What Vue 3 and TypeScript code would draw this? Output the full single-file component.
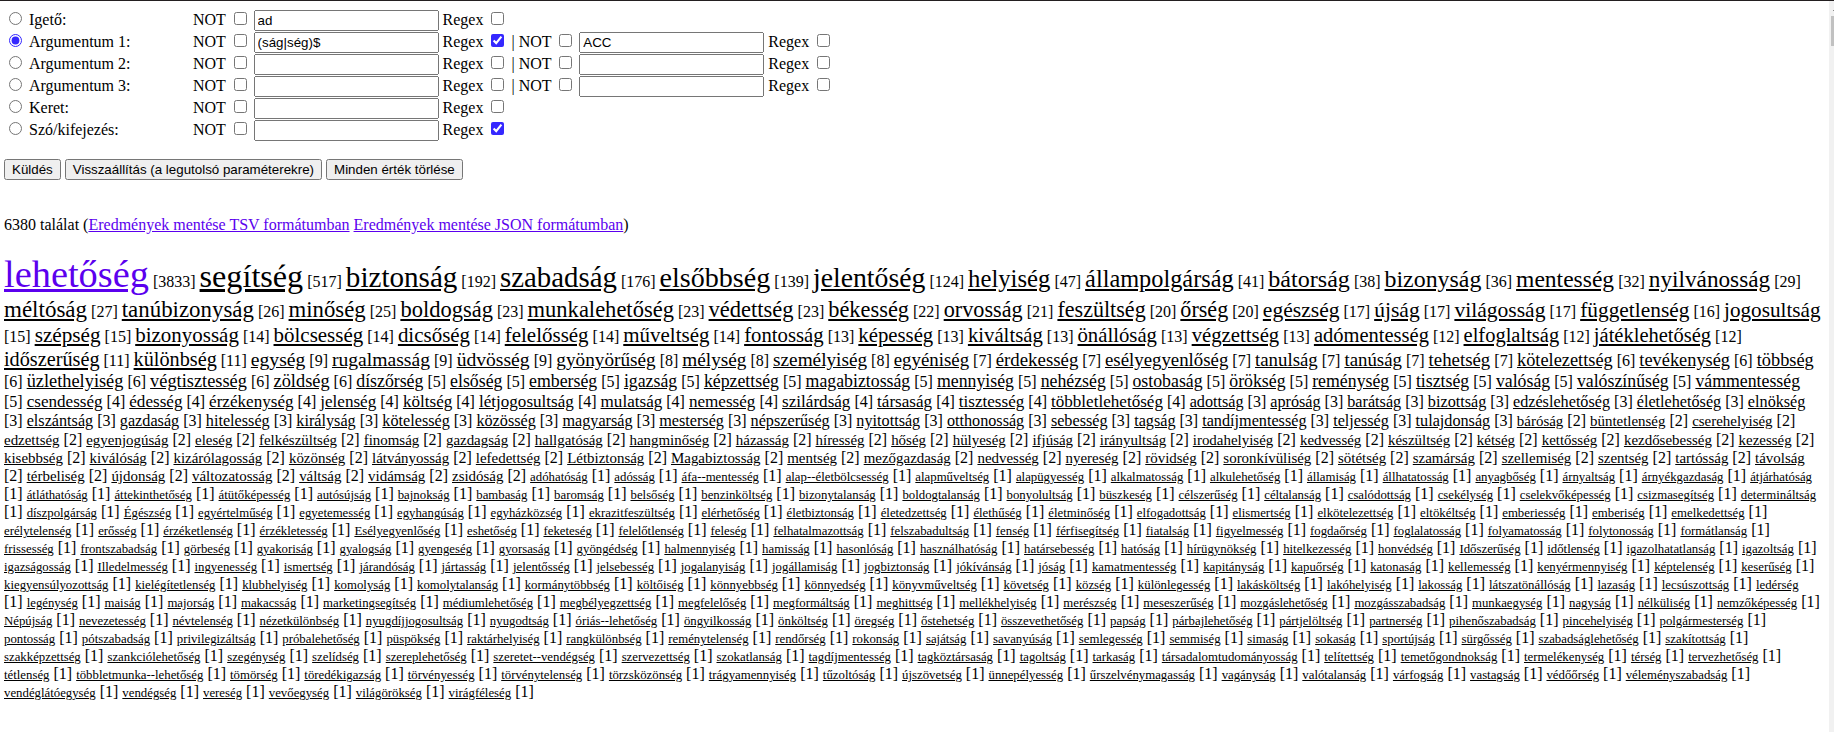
<script setup lang="ts">
import { reactive, ref } from 'vue'

interface Condition {
  not: boolean
  value: string
  regex: boolean
}

interface Field {
  id: string
  label: string
  conditions: Condition[]
}

const condition = (value = '', regex = false): Condition => ({ not: false, value, regex })

const initialFields = (): Field[] => [
  { id: 'verb', label: 'Igető:', conditions: [condition('ad')] },
  { id: 'arg1', label: 'Argumentum 1:', conditions: [condition('(ság|ség)$', true), condition('ACC')] },
  { id: 'arg2', label: 'Argumentum 2:', conditions: [condition(), condition()] },
  { id: 'arg3', label: 'Argumentum 3:', conditions: [condition(), condition()] },
  { id: 'frame', label: 'Keret:', conditions: [condition()] },
  { id: 'word', label: 'Szó/kifejezés:', conditions: [condition('', true)] },
]

const fields = reactive<Field[]>(initialFields())
const selected = ref('arg1')

function restore() {
  fields.splice(0, fields.length, ...initialFields())
  selected.value = 'arg1'
}

function clearAll() {
  for (const field of fields) {
    for (const c of field.conditions) Object.assign(c, condition())
  }
}

// Words grouped by the number of occurrences.
const groups: [number, string][] = [
  [3833, 'lehetőség'],
  [517, 'segítség'],
  [192, 'biztonság'],
  [176, 'szabadság'],
  [139, 'elsőbbség'],
  [124, 'jelentőség'],
  [47, 'helyiség'],
  [41, 'állampolgárság'],
  [38, 'bátorság'],
  [36, 'bizonyság'],
  [32, 'mentesség'],
  [29, 'nyilvánosság'],
  [27, 'méltóság'],
  [26, 'tanúbizonyság'],
  [25, 'minőség'],
  [23, 'boldogság munkalehetőség védettség'],
  [22, 'békesség'],
  [21, 'orvosság'],
  [20, 'feszültség őrség'],
  [17, 'egészség újság világosság'],
  [16, 'függetlenség'],
  [15, 'jogosultság szépség'],
  [14, 'bizonyosság bölcsesség dicsőség felelősség műveltség'],
  [13, 'fontosság képesség kiváltság önállóság végzettség'],
  [12, 'adómentesség elfoglaltság játéklehetőség'],
  [11, 'időszerűség különbség'],
  [9, 'egység rugalmasság üdvösség'],
  [8, 'gyönyörűség mélység személyiség'],
  [7, 'egyéniség érdekesség esélyegyenlőség tanulság tanúság tehetség'],
  [6, 'kötelezettség tevékenység többség üzlethelyiség végtisztesség zöldség'],
  [5, `díszőrség elsőség emberség igazság képzettség magabiztosság mennyiség nehézség ostobaság
    örökség reménység tisztség valóság valószínűség vámmentesség`],
  [4, `csendesség édesség érzékenység jelenség költség létjogosultság mulatság nemesség szilárdság
    társaság tisztesség többletlehetőség`],
  [3, `adottság apróság barátság bizottság edzéslehetőség életlehetőség elnökség elszántság gazdaság
    hitelesség királyság kötelesség közösség magyarság mesterség népszerűség nyitottság otthonosság
    sebesség tagság tandíjmentesség teljesség tulajdonság`],
  [2, `báróság büntetlenség cserehelyiség edzettség egyenjogúság eleség felkészültség finomság
    gazdagság hallgatóság hangminőség házasság híresség hőség hülyeség ifjúság irányultság
    irodahelyiség kedvesség készültség kétség kettősség kezdősebesség kezesség kisebbség kiválóság
    kizárólagosság közönség látványosság lefedettség Létbiztonság Magabiztosság mentség
    mezőgazdaság nedvesség nyereség rövidség soronkívüliség sötétség szamárság szellemiség szentség
    tartósság távolság térbeliség újdonság változatosság váltság vidámság zsidóság`],
  [1, `adóhatóság adósság áfa--mentesség alap--életbölcsesség alapműveltség alapügyesség
    alkalmatosság alkulehetőség államiság állhatatosság anyagbőség árnyaltság árnyékgazdaság
    átjárhatóság átláthatóság áttekinthetőség átütőképesség autósújság bajnokság bambaság baromság
    belsőség benzinköltség bizonytalanság boldogtalanság bonyolultság büszkeség célszerűség
    céltalanság csalódottság csekélység cselekvőképesség csizmasegítség determináltság
    díszpolgárság Égészség egyértelműség egyetemesség egyhangúság egyházközség ekrazitfeszültség
    elérhetőség életbiztonság életedzettség élethűség életminőség elfogadottság elismertség
    elkötelezettség eltökéltség emberiesség emberiség emelkedettség erélytelenség erősség
    érzéketlenség érzékletesség Esélyegyenlőség eshetőség feketeség felelőtlenség feleség
    felhatalmazottság felszabadultság fenség férfisegítség fiatalság figyelmesség fogdaőrség
    foglalatosság folyamatosság folytonosság formátlanság frissesség frontszabadság görbeség
    gyakoriság gyalogság gyengeség gyorsaság gyöngédség halmennyiség hamisság hasonlóság
    használhatóság határsebesség hatóság hírügynökség hitelkezesség honvédség Időszerűség
    időtlenség igazolhatatlanság igazoltság igazságosság Illedelmesség ingyenesség ismertség
    járandóság jártasság jelentősség jelsebesség jogalanyiság jogállamiság jogbiztonság jókívánság
    jóság kamatmentesség kapitányság kapuőrség katonaság kellemesség kenyérmennyiség képtelenség
    keserűség kiegyensúlyozottság kielégítetlenség klubhelyiség komolyság komolytalanság
    kormánytöbbség költőiség könnyebbség könnyedség könyvműveltség követség község különlegesség
    lakásköltség lakóhelyiség lakosság látszatönállóság lazaság lecsúszottság ledérség legénység
    maiság majorság makacsság marketingsegítség médiumlehetőség megbélyegzettség megfelelőség
    megformáltság meghittség mellékhelyiség merészség meseszerűség mozgáslehetőség mozgásszabadság
    munkaegység nagyság nélküliség nemzőképesség Népújság nevezetesség névtelenség nézetkülönbség
    nyugdíjjogosultság nyugodtság óriás--lehetőség öngyilkosság önköltség öregség őstehetség
    összevethetőség papság párbajlehetőség pártjelöltség partnerség pihenőszabadság pincehelyiség
    polgármesterség pontosság pótszabadság privilegizáltság próbalehetőség püspökség
    raktárhelyiség rangkülönbség reménytelenség rendőrség rokonság sajátság savanyúság semlegesség
    semmiség simaság sokaság sportújság sürgősség szabadságlehetőség szakítottság szakképzettség
    szankciólehetőség szegénység szelídség szereplehetőség szeretet--vendégség szervezettség
    szokatlanság tagdíjmentesség tagköztársaság tagoltság tarkaság társadalomtudományosság
    telítettség temetőgondnokság termelékenység térség tervezhetőség tétlenség
    többletmunka--lehetőség tömörség töredékigazság törvényesség törvénytelenség törzsközönség
    trágyamennyiség tűzoltóság újszövetség ünnepélyesség űrszelvénymagasság vagányság valótalanság
    várfogság vastagság védőőrség véleményszabadság vendéglátóegység vendégség vereség vevőegység
    világörökség virágféleség`],
]

const words = groups.flatMap(([count, list]) =>
  list.split(/\s+/).map((text) => ({
    text,
    count,
    size: `${(80 + 19.38 * Math.log(count)).toFixed(1)}%`,
  })),
)
</script>

<template>
  <div class="page">
    <main class="content">
      <form @submit.prevent>
        <div v-for="field in fields" :key="field.id" class="row">
          <input :id="field.id" v-model="selected" type="radio" name="field" :value="field.id" />
          {{ ' ' }}<label class="name" :for="field.id">{{ field.label }}</label>
          <template v-for="(c, i) in field.conditions" :key="i">
            <template v-if="i > 0">{{ ' | ' }}</template>
            {{ ' ' }}<label>NOT <input v-model="c.not" type="checkbox" /></label>
            {{ ' ' }}<input v-model="c.value" class="text" type="text" :aria-label="field.label" />
            {{ ' ' }}<label>Regex <input v-model="c.regex" type="checkbox" /></label>
          </template>
        </div>
        <div class="actions">
          <button type="submit">Küldés</button>
          <button type="button" @click="restore">Visszaállítás (a legutolsó paraméterekre)</button>
          <button type="button" @click="clearAll">Minden érték törlése</button>
        </div>
      </form>
      <p class="summary">
        6380 találat (<a href="#tsv">Eredmények mentése TSV formátumban</a>
        {{ ' ' }}<a href="#json">Eredmények mentése JSON formátumban</a>)
      </p>
      <p class="cloud">
        <template v-for="(w, i) in words" :key="w.text">
          <a :href="'#' + w.text" :class="{ visited: i === 0 }" :style="{ fontSize: w.size }">{{ w.text }}</a>{{ ` [${w.count}] ` }}
        </template>
      </p>
    </main>
    <div class="scrollbar" aria-hidden="true">
      <span class="arrow"></span>
      <span class="thumb"></span>
    </div>
  </div>
</template>

<style>
body {
  background: #fff;
}
</style>

<style scoped>
.page {
  box-sizing: border-box;
  display: flex;
  min-height: 100vh;
  border-top: 1px solid #231f20;
  font-family: "Liberation Serif", "Times New Roman", serif;
  font-size: 16px;
  color: #000;
}

.content {
  flex: 1;
  min-width: 0;
  padding: 8px 8px 0 4px;
}

.row {
  height: 22px;
  white-space: nowrap;
}

.name {
  display: inline-block;
  width: 160px;
}

.text {
  box-sizing: border-box;
  width: 185px;
  height: 21px;
}

input {
  accent-color: #3528ff;
}

.actions {
  display: flex;
  gap: 4px;
  margin-top: 18px;
}

.summary {
  margin: 36px 0 18px;
}

.summary a,
.cloud .visited {
  color: #5b00ee;
}

.cloud {
  margin: 0;
}

.cloud a {
  color: #000;
}

.scrollbar {
  width: 5px;
  overflow: hidden;
  background: #f1f1f1;
}

.arrow {
  display: block;
  width: 1px;
  height: 1px;
  margin: 9px 0 5px 4px;
  background: #8a8a8a;
}

.thumb {
  display: block;
  height: 30px;
  margin-left: 2px;
  background: #c1c1c1;
}
</style>
